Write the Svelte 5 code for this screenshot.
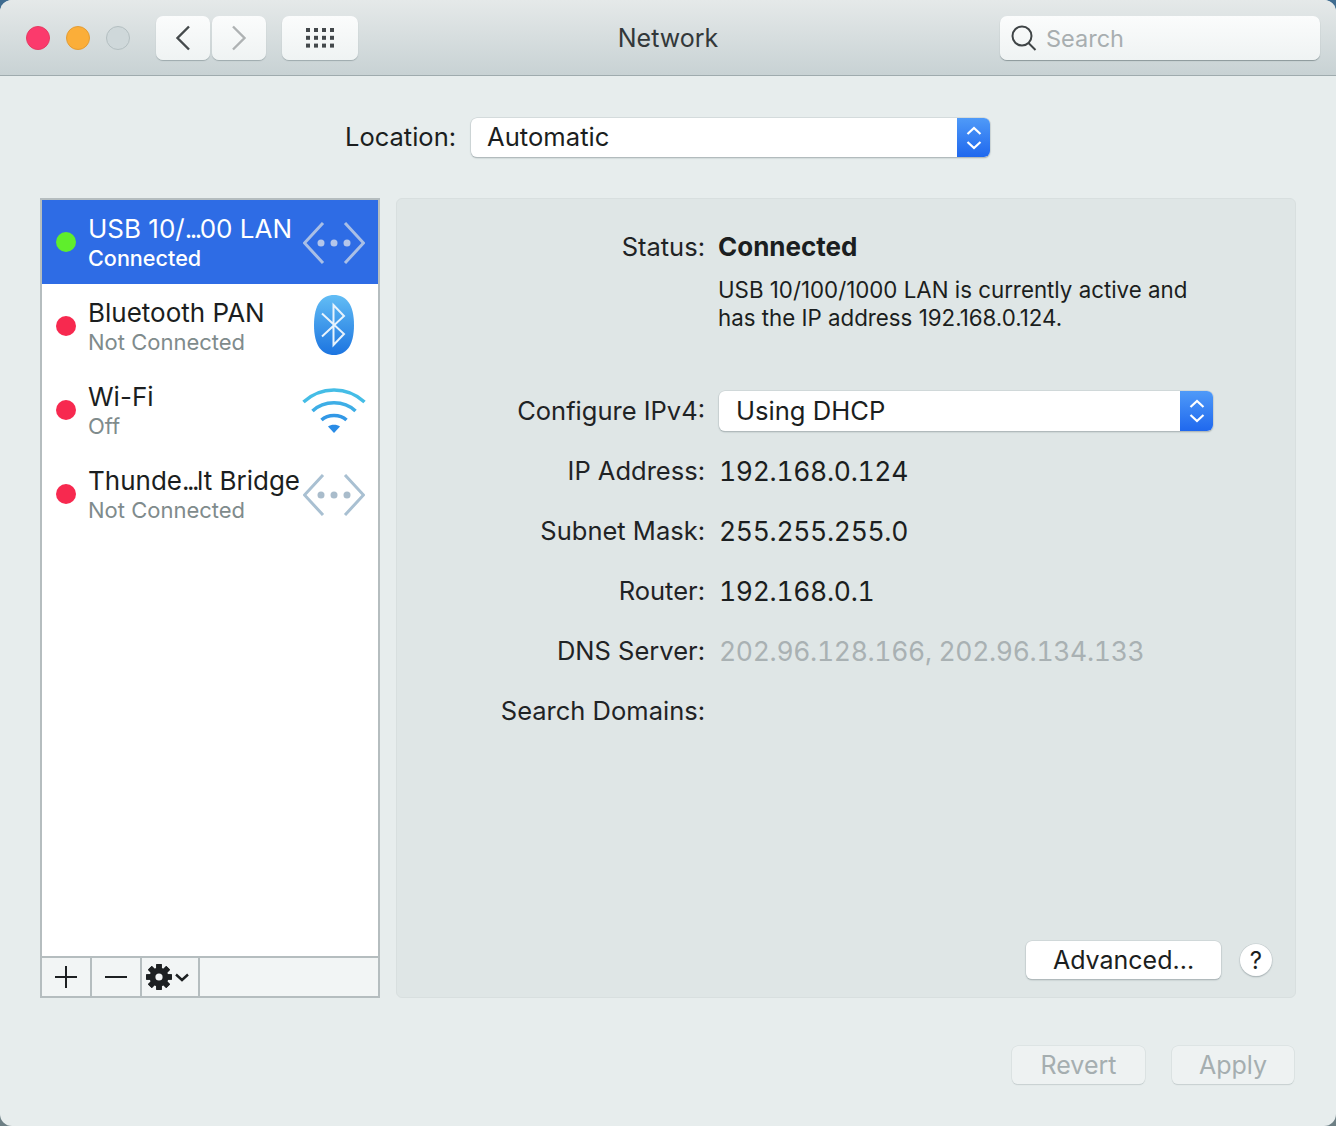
<script>
  const services = [
    { head: "USB 10/", tail: "00 LAN", status: "Connected", dot: "green", icon: "dots", selected: true },
    { head: "Bluetooth PAN", status: "Not Connected", dot: "red", icon: "bt" },
    { head: "Wi-Fi", status: "Off", dot: "red", icon: "wifi" },
    { head: "Thunde", tail: "lt Bridge", status: "Not Connected", dot: "red", icon: "dots" },
  ];

  const details = [
    { label: "IP Address:", value: "192.168.0.124" },
    { label: "Subnet Mask:", value: "255.255.255.0" },
    { label: "Router:", value: "192.168.0.1" },
    { label: "DNS Server:", value: "202.96.128.166, 202.96.134.133", dim: true },
    { label: "Search Domains:", value: "" },
  ];
</script>

{#snippet stepper()}
  <span class="stepper">
    <svg width="18" height="28" viewBox="0 0 18 28" fill="none" stroke="#fff" stroke-width="2.200">
      <path d="M2.500 10 9 4l6.500 6M2.500 18 9 24l6.500-6" />
    </svg>
  </span>
{/snippet}

<div class="window">
  <header class="toolbar">
    <div class="lights">
      <span class="light close"></span>
      <span class="light min"></span>
      <span class="light zoom"></span>
    </div>
    <div class="nav">
      <button class="tool" aria-label="Back">
        <svg width="16" height="26" viewBox="0 0 16 26" fill="none" stroke="#454a4c" stroke-width="2.400">
          <path d="M14 1.500 2.500 13 14 24.500" />
        </svg>
      </button>
      <button class="tool" aria-label="Forward">
        <svg width="16" height="26" viewBox="0 0 16 26" fill="none" stroke="#aeb2b3" stroke-width="2.400">
          <path d="M2 1.500 13.500 13 2 24.500" />
        </svg>
      </button>
    </div>
    <button class="tool grid" aria-label="Show all">
      <svg width="30" height="22" viewBox="0 0 30 22" fill="#43484b">
        {#each [0, 1, 2] as r}
          {#each [0, 1, 2, 3] as c}
            <rect x={1 + c * 8} y={1 + r * 7.800} width="4" height="4" />
          {/each}
        {/each}
      </svg>
    </button>
    <h1>Network</h1>
    <div class="search">
      <svg width="28" height="28" viewBox="0 0 28 28" fill="none" stroke="#3f4446" stroke-width="2">
        <circle cx="12" cy="12" r="9.500" />
        <path d="m18.500 19 7 7" />
      </svg>
      <span>Search</span>
    </div>
  </header>

  <div class="location">
    <span class="loc-label">Location:</span>
    <div class="select loc-select">
      <span class="select-text">Automatic</span>
      {@render stepper()}
    </div>
  </div>

  <div class="main">
    <aside class="sidebar">
      <ul>
        {#each services as s}
          <li class:selected={s.selected}>
            <span class="dot {s.dot}"></span>
            <div class="labels">
              <div class="name">{s.head}{#if s.tail}<span class="ell">...</span>{s.tail}{/if}</div>
              <div class="sub">{s.status}</div>
            </div>
            <span class="svc-icon">
              {#if s.icon === "dots"}
                <svg width="62" height="42" viewBox="0 0 62 42" fill="none">
                  <path d="M20 1 1.500 21 20 41M42 1l18.500 20L42 41" stroke={s.selected ? "#a9bfe6" : "#a9c0d2"} stroke-width="3" />
                  <g fill={s.selected ? "#b4c6ea" : "#a9bccb"}>
                    <circle cx="18" cy="21" r="3.500" />
                    <circle cx="31" cy="21" r="3.500" />
                    <circle cx="44" cy="21" r="3.500" />
                  </g>
                </svg>
              {:else if s.icon === "bt"}
                <svg class="bt" width="42" height="60" viewBox="0 0 42 60">
                  <defs>
                    <linearGradient id="btfill" x1="0" y1="0" x2="0" y2="1">
                      <stop offset="0" stop-color="#62bdf5" />
                      <stop offset="1" stop-color="#1c74e0" />
                    </linearGradient>
                  </defs>
                  <path d="M21 0C33 0 41 9 41 30S33 60 21 60 1 51 1 30 9 0 21 0Z" fill="url(#btfill)" />
                  <path d="M9 18.500 31 39 20.500 50V10L31 21 9 41.500" fill="none" stroke="#e8f3fc" stroke-width="2" />
                </svg>
              {:else}
                <svg width="64" height="48" viewBox="0 0 64 48" fill="none" stroke-linecap="butt">
                  <path d="M1.500 15C19 -1 45 -1 62.500 15" stroke="#45bde6" stroke-width="3.500" />
                  <path d="M10.500 24C22 13 42 13 53.500 24" stroke="#3eaee6" stroke-width="3.500" />
                  <path d="M19.500 33C26 27 38 27 44.500 33" stroke="#3298e6" stroke-width="3.500" />
                  <path d="M26 39.500C29 37 35 37 38 39.500L32 46Z" fill="#2a8ce6" />
                </svg>
              {/if}
            </span>
          </li>
        {/each}
      </ul>
      <div class="side-tools">
        <button aria-label="Add">
          <svg width="22" height="22" viewBox="0 0 22 22" stroke="#1d2022" stroke-width="2"><path d="M11 0v22M0 11h22" /></svg>
        </button>
        <button aria-label="Remove">
          <svg width="22" height="22" viewBox="0 0 22 22" stroke="#1d2022" stroke-width="2"><path d="M0 11h22" /></svg>
        </button>
        <button class="gear" aria-label="Actions">
          <svg width="26" height="26" viewBox="0 0 26 26">
            <g fill="#1d2022">
              {#each [0, 45, 90, 135, 180, 225, 270, 315] as a}
                <rect x="10.200" y="0" width="5.600" height="26" rx="0.800" transform="rotate({a} 13 13)" />
              {/each}
              <circle cx="13" cy="13" r="9.500" />
            </g>
            <circle cx="13" cy="13" r="3.600" fill="#f2f5f5" />
          </svg>
          <svg width="14" height="9" viewBox="0 0 14 9" fill="none" stroke="#1d2022" stroke-width="2.400"><path d="m1 1.500 6 5.500 6-5.500" /></svg>
        </button>
        <div class="tools-rest"></div>
      </div>
    </aside>

    <section class="panel">
      <div class="form-row status-row">
        <span class="label">Status:</span>
        <span class="status-value">Connected</span>
      </div>
      <p class="status-note">USB 10/100/1000 LAN is currently active and<br />has the IP address 192.168.0.124.</p>

      <div class="form-row config-row">
        <span class="label">Configure IPv4:</span>
        <div class="select cfg-select">
          <span class="select-text">Using DHCP</span>
          {@render stepper()}
        </div>
      </div>

      <div class="details">
        {#each details as d}
          <div class="form-row detail">
            <span class="label">{d.label}</span>
            <span class="value" class:dim={d.dim}>{d.value}</span>
          </div>
        {/each}
      </div>

      <div class="panel-actions">
        <button class="btn advanced">Advanced...</button>
        <button class="help">?</button>
      </div>
    </section>
  </div>

  <footer class="footer">
    <button class="btn off revert" disabled>Revert</button>
    <button class="btn off apply" disabled>Apply</button>
  </footer>
</div>

<style>
  :global(body) {
    margin: 0;
    background: linear-gradient(#3f6c90, #6d7f84);
    font-family: "Inter", "Liberation Sans", sans-serif;
    color: #1b1e20;
  }
  .window {
    width: 1336px;
    height: 1126px;
    display: flex;
    flex-direction: column;
    background: #e7eded;
    overflow: hidden;
    font-size: 25.500px;
    border-radius: 12px;
  }

  /* toolbar */
  .toolbar {
    height: 76px;
    box-sizing: border-box;
    flex: none;
    display: flex;
    align-items: flex-start;
    padding: 16px 16px 0 26px;
    position: relative;
    background: linear-gradient(#e5e9e9, #c8d2d4);
    border-bottom: 1.500px solid #9fabae;
  }
  .lights {
    display: flex;
    gap: 16px;
    margin-top: 10px;
  }
  .light {
    width: 24px;
    height: 24px;
    border-radius: 50%;
    box-sizing: border-box;
  }
  .close { background: #fb3a6c; border: 1px solid #e63a62; }
  .min { background: #fbae39; border: 1px solid #e49c34; }
  .zoom { background: #cfd8da; border: 1px solid #b4bfc1; }
  .nav {
    display: flex;
    gap: 2px;
    margin-left: 26px;
  }
  .tool {
    width: 54px;
    height: 44px;
    padding: 0;
    display: flex;
    align-items: center;
    justify-content: center;
    border: 0;
    border-radius: 7px;
    background: linear-gradient(#fbfcfc, #eff3f3);
    box-shadow: 0 1px 1px #9eaaad;
  }
  .grid {
    width: 76px;
    margin-left: 16px;
  }
  h1 {
    position: absolute;
    left: 0;
    right: 0;
    top: 23px;
    margin: 0;
    font-size: 25px;
    line-height: 30px;
    font-weight: 400;
    text-align: center;
    color: #33383a;
  }
  .search {
    margin-left: auto;
    width: 320px;
    height: 44px;
    box-sizing: border-box;
    padding-left: 10px;
    display: flex;
    align-items: center;
    gap: 8px;
    border-radius: 7px;
    background: linear-gradient(#fbfcfc, #eff3f3);
    box-shadow: 0 1px 1px #8b979a;
    color: #a8aeb0;
    font-size: 23.500px;
  }

  /* location */
  .location {
    flex: none;
    height: 122px;
    display: flex;
    align-items: flex-start;
    padding: 42px 0 0 345px;
    box-sizing: border-box;
  }
  .loc-label {
    line-height: 37px;
    margin-right: 15px;
  }
  .select {
    height: 40px;
    box-sizing: border-box;
    display: flex;
    align-items: center;
    justify-content: space-between;
    background: #fff;
    border-radius: 6px;
    box-shadow: 0 0 0 0.500px #c3cbcd, 0 1px 1.500px #8f9b9e;
    overflow: hidden;
    font-size: 25.600px;
  }
  .loc-select { width: 519px; height: 39px; }
  .cfg-select { width: 494px; }
  .select-text {
    padding-left: 17px;
    margin-bottom: 2px;
  }
  .loc-select .select-text { padding-left: 16px; }
  .stepper {
    width: 33px;
    height: 100%;
    display: flex;
    align-items: center;
    justify-content: center;
    background: linear-gradient(#4f9af8, #1f68ee);
  }

  /* main area */
  .main {
    flex: none;
    height: 800px;
    padding-left: 40px;
    display: flex;
    gap: 16px;
  }
  .sidebar {
    width: 340px;
    box-sizing: border-box;
    display: flex;
    flex-direction: column;
    border: 2px solid #b5bdbf;
    background: #fff;
  }
  ul {
    list-style: none;
    margin: 0;
    padding: 0;
    flex: 1;
  }
  li {
    height: 84px;
    box-sizing: border-box;
    padding: 12px 0 0 14px;
    display: flex;
    align-items: flex-start;
    position: relative;
  }
  li.selected {
    background: #2e6ce5;
    color: #fff;
  }
  .dot {
    width: 20px;
    height: 20px;
    border-radius: 50%;
    margin-top: 20px;
    margin-right: 12px;
    flex: none;
  }
  .dot.green { background: #5fee2c; }
  .dot.red { background: #f7294f; }
  .name {
    font-size: 26px;
    line-height: 34px;
    white-space: nowrap;
  }
  .ell {
    letter-spacing: -2.500px;
  }
  .sub {
    font-size: 22px;
    line-height: 24px;
    color: #7f8b8c;
    white-space: nowrap;
  }
  li.selected .sub {
    color: #fff;
    font-weight: 500;
    font-size: 21.600px;
  }
  .svc-icon {
    position: absolute;
    right: 12px;
    top: 1px;
    bottom: 0;
    width: 64px;
    display: flex;
    align-items: center;
    justify-content: center;
  }
  .bt {
    margin-top: -3px;
  }
  .side-tools {
    height: 40px;
    flex: none;
    display: flex;
    border-top: 2px solid #b5bdbf;
    box-sizing: border-box;
    background: #f2f5f5;
  }
  .side-tools button {
    width: 50px;
    padding: 0;
    border: 0;
    border-right: 2px solid #b5bdbf;
    background: none;
    display: flex;
    align-items: center;
    justify-content: center;
  }
  .side-tools .gear {
    width: 58px;
    gap: 3px;
    padding-right: 6px;
  }
  .tools-rest { flex: 1; }

  /* right panel */
  .panel {
    width: 900px;
    box-sizing: border-box;
    position: relative;
    background: #dfe6e6;
    border: 1px solid #d8dfdf;
    border-radius: 6px;
    padding-top: 28px;
  }
  .form-row {
    display: flex;
    align-items: center;
    height: 40px;
  }
  .label {
    width: 308px;
    text-align: right;
    margin-right: 14px;
    margin-bottom: 2px;
    white-space: nowrap;
    color: #1f2325;
  }
  .status-value {
    font-weight: 700;
    font-size: 26px;
    margin-bottom: 2px;
    margin-left: -1px;
  }
  .status-note {
    margin: 9px 0 0 321px;
    font-size: 22.300px;
    line-height: 28px;
  }
  .config-row {
    margin-top: 59px;
  }
  .details {
    margin-top: 20px;
  }
  .detail {
    margin-bottom: 20px;
  }
  .value {
    font-size: 26.500px;
    font-variant-numeric: tabular-nums;
    letter-spacing: -0.320px;
  }
  .value.dim {
    color: #a9b1b3;
  }
  .panel-actions {
    position: absolute;
    right: 23px;
    bottom: 18px;
    display: flex;
    align-items: center;
    gap: 19px;
  }
  .btn {
    font: inherit;
    font-size: 25px;
    padding: 0;
    border: 0;
    height: 38px;
    border-radius: 6px;
    color: #1b1e20;
  }
  .advanced {
    width: 195px;
    background: #fff;
    box-shadow: 0 0 0 0.500px #c3cbcd, 0 1px 1.500px #8f9b9e;
  }
  .help {
    width: 32px;
    height: 32px;
    padding: 0;
    font: inherit;
    font-size: 24px;
    border: 0;
    border-radius: 50%;
    background: #fff;
    color: #1b1e20;
    box-shadow: 0 0 0 0.500px #c3cbcd, 0 1px 1.500px #8f9b9e;
  }

  /* footer */
  .footer {
    flex: 1;
    display: flex;
    justify-content: flex-end;
    gap: 27px;
    padding: 48px 42px 0 0;
  }
  .off {
    background: #eef2f2;
    color: #a5aeb0;
    box-shadow: 0 0 0 0.500px #d4dbdb, 0 1px 1px #bcc5c7;
  }
  .revert { width: 133px; }
  .apply { width: 122px; }
</style>
